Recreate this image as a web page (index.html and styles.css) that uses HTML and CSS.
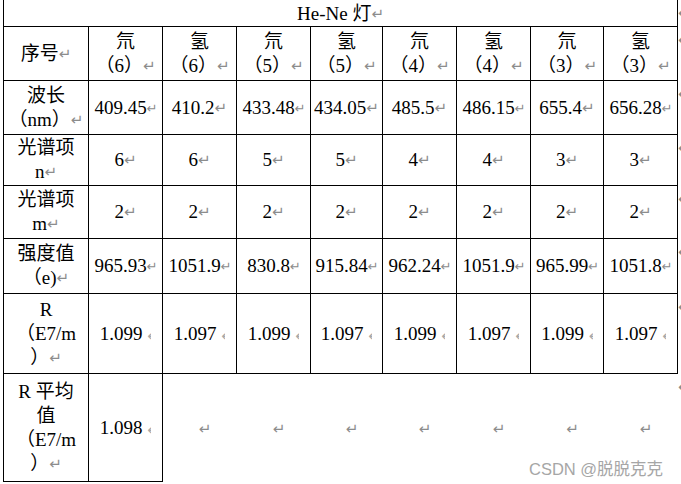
FILE: index.html
```html
<!DOCTYPE html>
<html lang="zh-CN">
<head>
  <meta charset="UTF-8">
  <title>He-Ne 灯</title>
  <meta name="viewport" content="width=device-width, initial-scale=1.0">
  <link rel="stylesheet" href="styles.css">
</head>
<body>
  <div class="sheet">
    <div class="c head"><p>He-Ne 灯<i class="mk">↵</i></p></div>
    <div class="eor"><i class="mk">↵</i></div>

    <div class="c first"><p>序号<i class="mk">↵</i></p></div>
    <div class="c"><p>氘<br>（6）<i class="mk">↵</i></p></div>
    <div class="c"><p>氢<br>（6）<i class="mk">↵</i></p></div>
    <div class="c"><p>氘<br>（5）<i class="mk">↵</i></p></div>
    <div class="c"><p>氢<br>（5）<i class="mk">↵</i></p></div>
    <div class="c"><p>氘<br>（4）<i class="mk">↵</i></p></div>
    <div class="c"><p>氢<br>（4）<i class="mk">↵</i></p></div>
    <div class="c"><p>氘<br>（3）<i class="mk">↵</i></p></div>
    <div class="c"><p>氢<br>（3）<i class="mk">↵</i></p></div>
    <div class="eor"><i class="mk">↵</i></div>

    <div class="c first"><p>波长<br>（nm）<i class="mk">↵</i></p></div>
    <div class="c"><p>409.45<i class="mk tight">↵</i></p></div>
    <div class="c"><p>410.2<i class="mk">↵</i></p></div>
    <div class="c"><p>433.48<i class="mk tight">↵</i></p></div>
    <div class="c"><p>434.05<i class="mk">↵</i></p></div>
    <div class="c"><p>485.5<i class="mk">↵</i></p></div>
    <div class="c"><p>486.15<i class="mk tight">↵</i></p></div>
    <div class="c"><p>655.4<i class="mk">↵</i></p></div>
    <div class="c"><p>656.28<i class="mk tight">↵</i></p></div>
    <div class="eor"><i class="mk">↵</i></div>

    <div class="c first"><p>光谱项<br>n<i class="mk">↵</i></p></div>
    <div class="c"><p>6<i class="mk">↵</i></p></div>
    <div class="c"><p>6<i class="mk">↵</i></p></div>
    <div class="c"><p>5<i class="mk">↵</i></p></div>
    <div class="c"><p>5<i class="mk">↵</i></p></div>
    <div class="c"><p>4<i class="mk">↵</i></p></div>
    <div class="c"><p>4<i class="mk">↵</i></p></div>
    <div class="c"><p>3<i class="mk">↵</i></p></div>
    <div class="c"><p>3<i class="mk">↵</i></p></div>
    <div class="eor"><i class="mk">↵</i></div>

    <div class="c first"><p>光谱项<br>m<i class="mk">↵</i></p></div>
    <div class="c"><p>2<i class="mk">↵</i></p></div>
    <div class="c"><p>2<i class="mk">↵</i></p></div>
    <div class="c"><p>2<i class="mk">↵</i></p></div>
    <div class="c"><p>2<i class="mk">↵</i></p></div>
    <div class="c"><p>2<i class="mk">↵</i></p></div>
    <div class="c"><p>2<i class="mk">↵</i></p></div>
    <div class="c"><p>2<i class="mk">↵</i></p></div>
    <div class="c"><p>2<i class="mk">↵</i></p></div>
    <div class="eor"><i class="mk">↵</i></div>

    <div class="c first"><p>强度值<br>（e)<i class="mk">↵</i></p></div>
    <div class="c"><p>965.93<i class="mk tight">↵</i></p></div>
    <div class="c"><p>1051.9<i class="mk tight">↵</i></p></div>
    <div class="c"><p>830.8<i class="mk tight">↵</i></p></div>
    <div class="c"><p>915.84<i class="mk tight">↵</i></p></div>
    <div class="c"><p>962.24<i class="mk tight">↵</i></p></div>
    <div class="c"><p>1051.9<i class="mk tight">↵</i></p></div>
    <div class="c"><p>965.99<i class="mk tight">↵</i></p></div>
    <div class="c"><p>1051.8<i class="mk tight">↵</i></p></div>
    <div class="eor"><i class="mk">↵</i></div>

    <div class="c first"><p>R<br>（E7/m<br>）<i class="mk">↵</i></p></div>
    <div class="c"><p>1.099 <i class="mk dot">↵</i></p></div>
    <div class="c"><p>1.097 <i class="mk dot">↵</i></p></div>
    <div class="c"><p>1.099 <i class="mk dot">↵</i></p></div>
    <div class="c"><p>1.097 <i class="mk dot">↵</i></p></div>
    <div class="c"><p>1.099 <i class="mk dot">↵</i></p></div>
    <div class="c"><p>1.097 <i class="mk dot">↵</i></p></div>
    <div class="c"><p>1.099 <i class="mk dot">↵</i></p></div>
    <div class="c"><p>1.097 <i class="mk dot">↵</i></p></div>
    <div class="eor"><i class="mk">↵</i></div>

    <div class="c first"><p>R 平均<br>值<br>（E7/m<br>）<i class="mk">↵</i></p></div>
    <div class="c"><p>1.098 <i class="mk dot">↵</i></p></div>
    <div class="c blank"><p><i class="mk">↵</i></p></div>
    <div class="c blank"><p><i class="mk">↵</i></p></div>
    <div class="c blank"><p><i class="mk">↵</i></p></div>
    <div class="c blank"><p><i class="mk">↵</i></p></div>
    <div class="c blank"><p><i class="mk">↵</i></p></div>
    <div class="c blank"><p><i class="mk">↵</i></p></div>
    <div class="c blank"><p><i class="mk">↵</i></p></div>
    <div class="eor"><i class="mk">↵</i></div>
  </div>
  <div class="watermark">CSDN @脱脱克克</div>
</body>
</html>
```

FILE: styles.css
```css
body {
  margin: 0;
  background: #fff;
  font-family: 'Liberation Serif', 'Noto Sans CJK SC', serif;
  font-size: 19px;
  color: #000;
  position: relative;
  width: 681px;
  height: 484px;
  overflow: hidden;
}
.sheet {
  display: grid;
  grid-template-columns: 86px 74px 74px 74px 72px 74px 74px 73px 74px 4px;
  grid-template-rows: 27px 54px 54px 51px 53px 55px 80px 108px;
  margin-left: 3px;
}
.c {
  box-sizing: border-box;
  border-right: 1px solid #000;
  border-bottom: 1px solid #000;
  display: flex;
  flex-direction: column;
  justify-content: center;
  align-items: center;
  text-align: center;
  overflow: hidden;
}
.c p {
  margin: 0;
  line-height: 24px;
  white-space: nowrap;
}
.head {
  grid-column: 1 / 10;
  border-left: 1px solid #000;
}
.head p {
  line-height: 22px;
  padding-top: 1px;
}
.first {
  border-left: 1px solid #000;
}
.blank {
  border: none;
}
.blank p {
  padding-left: 10px;
  padding-top: 2px;
}

/* paragraph marks */
.mk {
  font-style: normal;
  font-family: 'DejaVu Sans', sans-serif;
  font-size: 15px;
  line-height: 0;
  color: #8c8c8c;
  vertical-align: 1px;
}
.mk.tight {
  font-size: 13px;
  letter-spacing: -1px;
}
.mk.dot {
  display: inline-block;
  overflow: hidden;
  width: 4px;
  height: 10px;
  line-height: 10px;
  vertical-align: -1px;
  color: #a8a8a8;
}
.eor {
  overflow: hidden;
  padding-top: 6px;
  line-height: 14px;
}
.watermark {
  position: absolute;
  left: 529px;
  top: 456px;
  font-family: 'Liberation Sans', 'Noto Sans CJK SC', sans-serif;
  font-size: 16.5px;
  color: #a6a6a6;
  white-space: nowrap;
}
```
